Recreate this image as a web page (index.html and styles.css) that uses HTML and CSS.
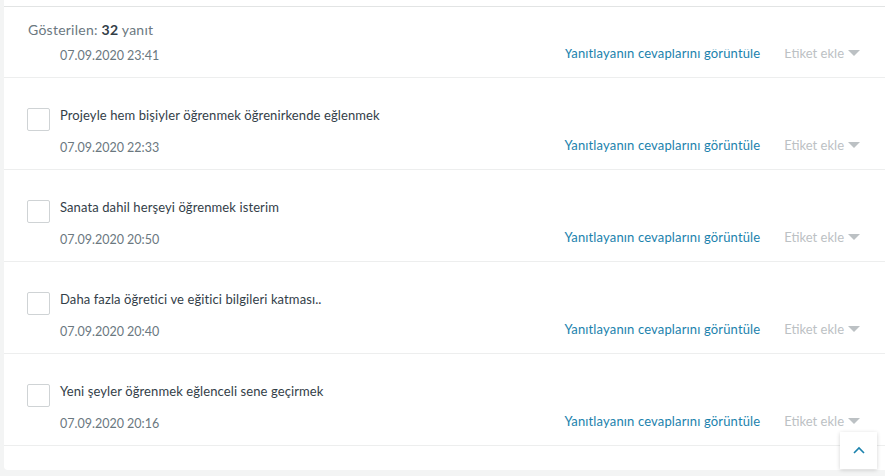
FILE: index.html
```html
<!DOCTYPE html>
<html lang="tr">
<head>
    <meta charset="UTF-8">
    <meta name="viewport" content="width=device-width, initial-scale=1.0">
    <title>Yanıtlar</title>
    <link rel="stylesheet" href="styles.css">
</head>
<body>
    <div class="panel">
        <div class="panel-top"></div>

        <div class="list-header">
            Gösterilen: <strong>32</strong> yanıt
        </div>

        <div class="responses">
            <!-- first row is scrolled under the header, only its meta line peeks out -->
            <div class="response response-partial">
                <div class="response-body">
                    <div class="meta">
                        <span class="date">07.09.2020 23:41</span>
                        <a href="#" class="view-link">Yanıtlayanın cevaplarını görüntüle</a>
                        <span class="tag">Etiket ekle <span class="caret"></span></span>
                    </div>
                </div>
            </div>

            <div class="response">
                <span class="check"></span>
                <div class="response-body">
                    <div class="answer">Projeyle hem bişiyler öğrenmek öğrenirkende eğlenmek</div>
                    <div class="meta">
                        <span class="date">07.09.2020 22:33</span>
                        <a href="#" class="view-link">Yanıtlayanın cevaplarını görüntüle</a>
                        <span class="tag">Etiket ekle <span class="caret"></span></span>
                    </div>
                </div>
            </div>

            <div class="response">
                <span class="check"></span>
                <div class="response-body">
                    <div class="answer">Sanata dahil herşeyi öğrenmek isterim</div>
                    <div class="meta">
                        <span class="date">07.09.2020 20:50</span>
                        <a href="#" class="view-link">Yanıtlayanın cevaplarını görüntüle</a>
                        <span class="tag">Etiket ekle <span class="caret"></span></span>
                    </div>
                </div>
            </div>

            <div class="response">
                <span class="check"></span>
                <div class="response-body">
                    <div class="answer">Daha fazla öğretici ve eğitici bilgileri katması..</div>
                    <div class="meta">
                        <span class="date">07.09.2020 20:40</span>
                        <a href="#" class="view-link">Yanıtlayanın cevaplarını görüntüle</a>
                        <span class="tag">Etiket ekle <span class="caret"></span></span>
                    </div>
                </div>
            </div>

            <div class="response">
                <span class="check"></span>
                <div class="response-body">
                    <div class="answer">Yeni şeyler öğrenmek eğlenceli sene geçirmek</div>
                    <div class="meta">
                        <span class="date">07.09.2020 20:16</span>
                        <a href="#" class="view-link">Yanıtlayanın cevaplarını görüntüle</a>
                        <span class="tag">Etiket ekle <span class="caret"></span></span>
                    </div>
                </div>
            </div>
        </div>
    </div>

    <button class="to-top" aria-label="Yukarı">
        <svg viewBox="0 0 16 16" fill="none" stroke="currentColor" stroke-width="1.6">
            <polyline points="3,10 8,5 13,10"></polyline>
        </svg>
    </button>
</body>
</html>
```

FILE: styles.css
```css
* {
    margin: 0;
    padding: 0;
    box-sizing: border-box;
}

body {
    font-family: Lato, "Noto Sans", sans-serif;
    background: #f3f4f4;
    padding-left: 4px;
    height: 476px;
    overflow: hidden;
}

.panel {
    background: white;
    border-radius: 0 0 4px 4px;
    margin-right: -10px;
    overflow: hidden;
    height: 470px;
}

.panel-top {
    height: 7px;
    border-bottom: 1px solid #e2e4e4;
}

.list-header {
    position: relative;
    z-index: 1;
    background: white;
    height: 42px;
    padding: 14px 0 0 24px;
    font-size: 14px;
    letter-spacing: 0.25px;
    color: #6b787f;
}

.list-header strong {
    color: #333e48;
}

.responses {
    margin-top: -63px;
}

.response {
    display: flex;
    gap: 10px;
    height: 92px;
    padding: 30px 35px 0 23px;
    border-bottom: 1px solid #edeeee;
}

.response-partial .response-body {
    padding-left: 33px;
}

.response-partial .meta {
    margin-top: 29px;
}

.check {
    flex: none;
    width: 23px;
    height: 23px;
    border: 1px solid #cfd3d5;
    border-radius: 2px;
}

.response-body {
    flex: 1;
}

.answer {
    font-size: 13px;
    line-height: 16px;
    letter-spacing: 0.1px;
    color: #333e48;
    margin-top: -1px;
}

.meta {
    display: flex;
    align-items: center;
    margin-top: 14px;
    font-size: 13px;
}

.date {
    flex: 1;
    font-size: 12.5px;
    color: #6b787f;
}

.view-link {
    color: #1b82ad;
    text-decoration: none;
    letter-spacing: 0.15px;
    margin-bottom: 4px;
}

.tag {
    display: flex;
    align-items: center;
    gap: 4px;
    margin-left: 24px;
    margin-bottom: 4px;
    color: #bcc1c4;
}

.caret {
    width: 0;
    height: 0;
    border-left: 6px solid transparent;
    border-right: 6px solid transparent;
    border-top: 6px solid #bcc1c4;
}

.to-top {
    position: fixed;
    left: 840px;
    top: 432px;
    width: 37px;
    height: 37px;
    background: white;
    border: none;
    box-shadow: 0 1px 4px rgba(0, 0, 0, 0.18);
    color: #1b82ad;
    display: flex;
    align-items: center;
    justify-content: center;
}

.to-top svg {
    width: 16px;
    height: 16px;
}
```
